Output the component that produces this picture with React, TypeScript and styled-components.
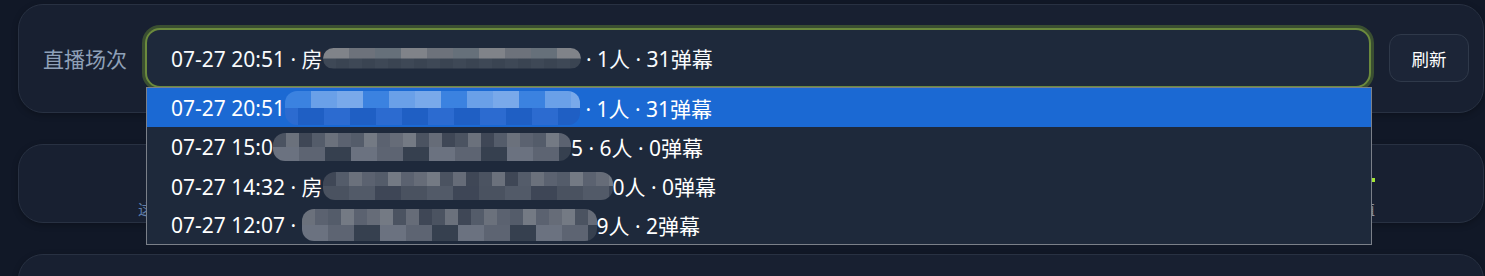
import React from "react";
import styled, { createGlobalStyle } from "styled-components";

const GlobalStyle = createGlobalStyle`
  html, body {
    margin: 0;
    background: #111827;
    overflow: hidden;
  }
  body {
    font-family: "Noto Sans", "Noto Sans CJK SC", sans-serif;
    color: #f1f5f9;
  }
`;

const Page = styled.div`
  display: flex;
  flex-direction: column;
  gap: 31px;
  padding: 4px 1px 0 18px;
`;

const Card = styled.div`
  position: relative;
  background: #182031;
  border: 1px solid #283142;
  border-radius: 25px;
  box-shadow: 0 2px 6px rgba(0, 0, 0, 0.25);
`;

const SessionBar = styled(Card)`
  display: flex;
  align-items: center;
  gap: 18px;
  padding: 23px 14px 24px 24px;
  z-index: 2;
`;

const Label = styled.span`
  font-size: 21px;
  color: #8fa0b8;
  white-space: nowrap;
`;

const SelectWrap = styled.div`
  position: relative;
  flex: 1;
`;

const SelectBox = styled.div`
  box-sizing: border-box;
  height: 60px;
  display: flex;
  align-items: center;
  padding: 0 24px;
  background: #1e293b;
  border: 2px solid #6b8a3d;
  border-radius: 15px;
  box-shadow: 0 0 0 3px rgba(110, 150, 50, 0.4);
  font-size: 21px;
  color: #f8fafc;
  white-space: nowrap;
`;

const Dropdown = styled.ul`
  position: absolute;
  left: 1px;
  right: -1px;
  top: calc(100% - 1px);
  margin: 0;
  padding: 0;
  list-style: none;
  background: #1e293b;
  border: 1px solid #7b8089;
  z-index: 5;
`;

const Option = styled.li<{ $active?: boolean }>`
  height: 39px;
  display: flex;
  align-items: center;
  padding-left: 24px;
  font-size: 21px;
  white-space: nowrap;
  color: #ffffff;
  background: ${(p) => (p.$active ? "#1b69d3" : "transparent")};
`;

const cells = (colors: string[], w: number, seed: number) => {
  const n = Math.ceil(w / 13);
  const stops: string[] = [];
  for (let i = 0; i < n; i++) {
    const c = colors[(i * 5 + seed * 3 + ((i * i) % 4)) % colors.length];
    stops.push(`${c} ${i * 13}px ${(i + 1) * 13}px`);
  }
  return `linear-gradient(90deg, ${stops.join(", ")})`;
};

const Mosaic = styled.span<{ $w: number; $h: number; $top: string[]; $bottom: string[]; $seed: number }>`
  display: inline-block;
  vertical-align: middle;
  width: ${(p) => p.$w}px;
  height: ${(p) => p.$h}px;
  border-radius: 12px;
  background-image: ${(p) => cells(p.$top, p.$w, p.$seed)}, ${(p) => cells(p.$bottom, p.$w, p.$seed + 2)};
  background-size: 100% 50%;
  background-position: top, bottom;
  background-repeat: no-repeat;
  filter: blur(0.4px);
`;

const RefreshButton = styled.button`
  width: 80px;
  height: 48px;
  flex: none;
  border-radius: 12px;
  border: 1px solid #2f394a;
  background: #1c2537;
  color: #ffffff;
  font-family: inherit;
  font-size: 17.5px;
  cursor: pointer;
`;

const StatsCard = styled(Card)`
  box-sizing: border-box;
  height: 79px;
  display: flex;
  flex-direction: column;
  padding: 33px 108px 0 119px;
  gap: 19px;
`;

const LegendRow = styled.div`
  display: flex;
  justify-content: flex-end;
`;

const LimeDot = styled.span`
  width: 4px;
  height: 4px;
  background: #a3e635;
`;

const HintRow = styled.div`
  display: flex;
  justify-content: space-between;
  font-size: 15px;
  line-height: 17px;
  color: #5d7ca8;
`;

const HintRight = styled.span`
  color: #8b93a1;
`;

const ListCard = styled(Card)`
  height: 120px;
`;

const greyTop = ["#5b6270", "#6b717c", "#4b5361", "#747a84", "#545c6a", "#3f4756", "#666c78"];
const greyBottom = ["#4a5260", "#5d6472", "#3e4656", "#6b7280", "#525a68", "#36404f"];
const selTop = ["#7b7f87", "#6d727b", "#5e6873", "#808389", "#727780", "#66707a"];
const selBottom = ["#3a4452", "#434c59", "#333d4b", "#4a525e", "#3e4856"];
const blueTop = ["#3b82e0", "#5b95e6", "#79a9ea", "#4c8be3", "#6aa0e8", "#2f74d6"];
const blueBottom = ["#2c6bd0", "#3f7ed9", "#1f5fc4", "#3574d4"];

const options = [
  { pre: "07-27 20:51", w: 295, h: 34, top: blueTop, bottom: blueBottom, post: " · 1人 · 31弹幕", active: true },
  { pre: "07-27 15:0", w: 298, h: 28, top: greyTop, bottom: greyBottom, post: "5 · 6人 · 0弹幕" },
  { pre: "07-27 14:32 · 房", w: 290, h: 28, top: greyTop, bottom: greyBottom, post: "0人 · 0弹幕" },
  { pre: "07-27 12:07 · ", w: 295, h: 32, top: greyTop, bottom: greyBottom, post: "9人 · 2弹幕" },
];

const App: React.FC = () => {
  return (
    <>
      <GlobalStyle />
      <Page>
        <SessionBar>
          <Label>直播场次</Label>
          <SelectWrap>
            <SelectBox>
              07-27 20:51 · 房
              <Mosaic $w={258} $h={21} $top={selTop} $bottom={selBottom} $seed={1} />
              &nbsp;· 1人 · 31弹幕
            </SelectBox>
            <Dropdown>
              {options.map((o, i) => (
                <Option key={i} $active={o.active}>
                  {o.pre.replace(/ $/, "\u00a0")}
                  <Mosaic $w={o.w} $h={o.h} $top={o.top} $bottom={o.bottom} $seed={i + 2} />
                  {o.post.replace(/^ /, "\u00a0")}
                </Option>
              ))}
            </Dropdown>
          </SelectWrap>
          <RefreshButton>刷新</RefreshButton>
        </SessionBar>
        <StatsCard>
          <LegendRow>
            <LimeDot />
          </LegendRow>
          <HintRow>
            <span>这场直播暂无弹幕统计</span>
            <HintRight>弹幕峰值</HintRight>
          </HintRow>
        </StatsCard>
        <ListCard />
      </Page>
    </>
  );
};

export default App;
